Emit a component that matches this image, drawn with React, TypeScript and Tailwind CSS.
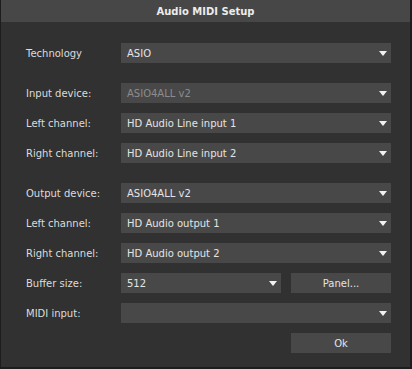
const font = { fontFamily: '"DejaVu Sans", "Noto Sans", sans-serif' };

function Arrow() {
  return (
    <svg width="8" height="5" viewBox="0 0 8 5" className="shrink-0">
      <path d="M0 0H8L4 5Z" fill="#f2f2f2" />
    </svg>
  );
}

function Select({ value, disabled, className = "w-[270px]" }: { value: string; disabled?: boolean; className?: string }) {
  return (
    <div className={`h-5 bg-[#484848] flex items-center justify-between pl-[6px] pr-1 ${className}`}>
      <span className={disabled ? "text-[#8c8c8c]" : "text-[#e4e4e4]"}>{value}</span>
      <Arrow />
    </div>
  );
}

function Row({ label, children }: { label: string; children: React.ReactNode }) {
  return (
    <div className="flex items-center h-5">
      <div className="w-[95px] text-[#dcdcdc]">{label}</div>
      {children}
    </div>
  );
}

export default function App() {
  return (
    <div
      className="w-[412px] h-[369px] bg-[#313131] flex flex-col border-l border-r-2 border-b-2 border-[#1d1d1d] text-[10px]"
      style={font}
    >
      <div className="h-[22px] bg-[#474747] flex items-center justify-center font-bold text-[#ececec]">
        Audio MIDI Setup
      </div>

      <div className="flex flex-col pt-[21px] pl-[25px]">
        <Row label="Technology">
          <Select value="ASIO" />
        </Row>

        <div className="flex flex-col gap-[10px] mt-5">
          <Row label="Input device:">
            <Select value="ASIO4ALL v2" disabled />
          </Row>
          <Row label="Left channel:">
            <Select value="HD Audio Line input 1" />
          </Row>
          <Row label="Right channel:">
            <Select value="HD Audio Line input 2" />
          </Row>
        </div>

        <div className="flex flex-col gap-[10px] mt-5">
          <Row label="Output device:">
            <Select value="ASIO4ALL v2" />
          </Row>
          <Row label="Left channel:">
            <Select value="HD Audio output 1" />
          </Row>
          <Row label="Right channel:">
            <Select value="HD Audio output 2" />
          </Row>
          <Row label="Buffer size:">
            <Select value="512" className="w-[160px]" />
            <button className="ml-[10px] w-[100px] h-5 bg-[#484848] text-[#e4e4e4] flex items-center justify-center">
              Panel...
            </button>
          </Row>
          <Row label="MIDI input:">
            <Select value="" />
          </Row>
          <div className="flex h-5">
            <button className="ml-[265px] w-[100px] h-5 bg-[#484848] text-[#e4e4e4] flex items-center justify-center">
              Ok
            </button>
          </div>
        </div>
      </div>
    </div>
  );
}
